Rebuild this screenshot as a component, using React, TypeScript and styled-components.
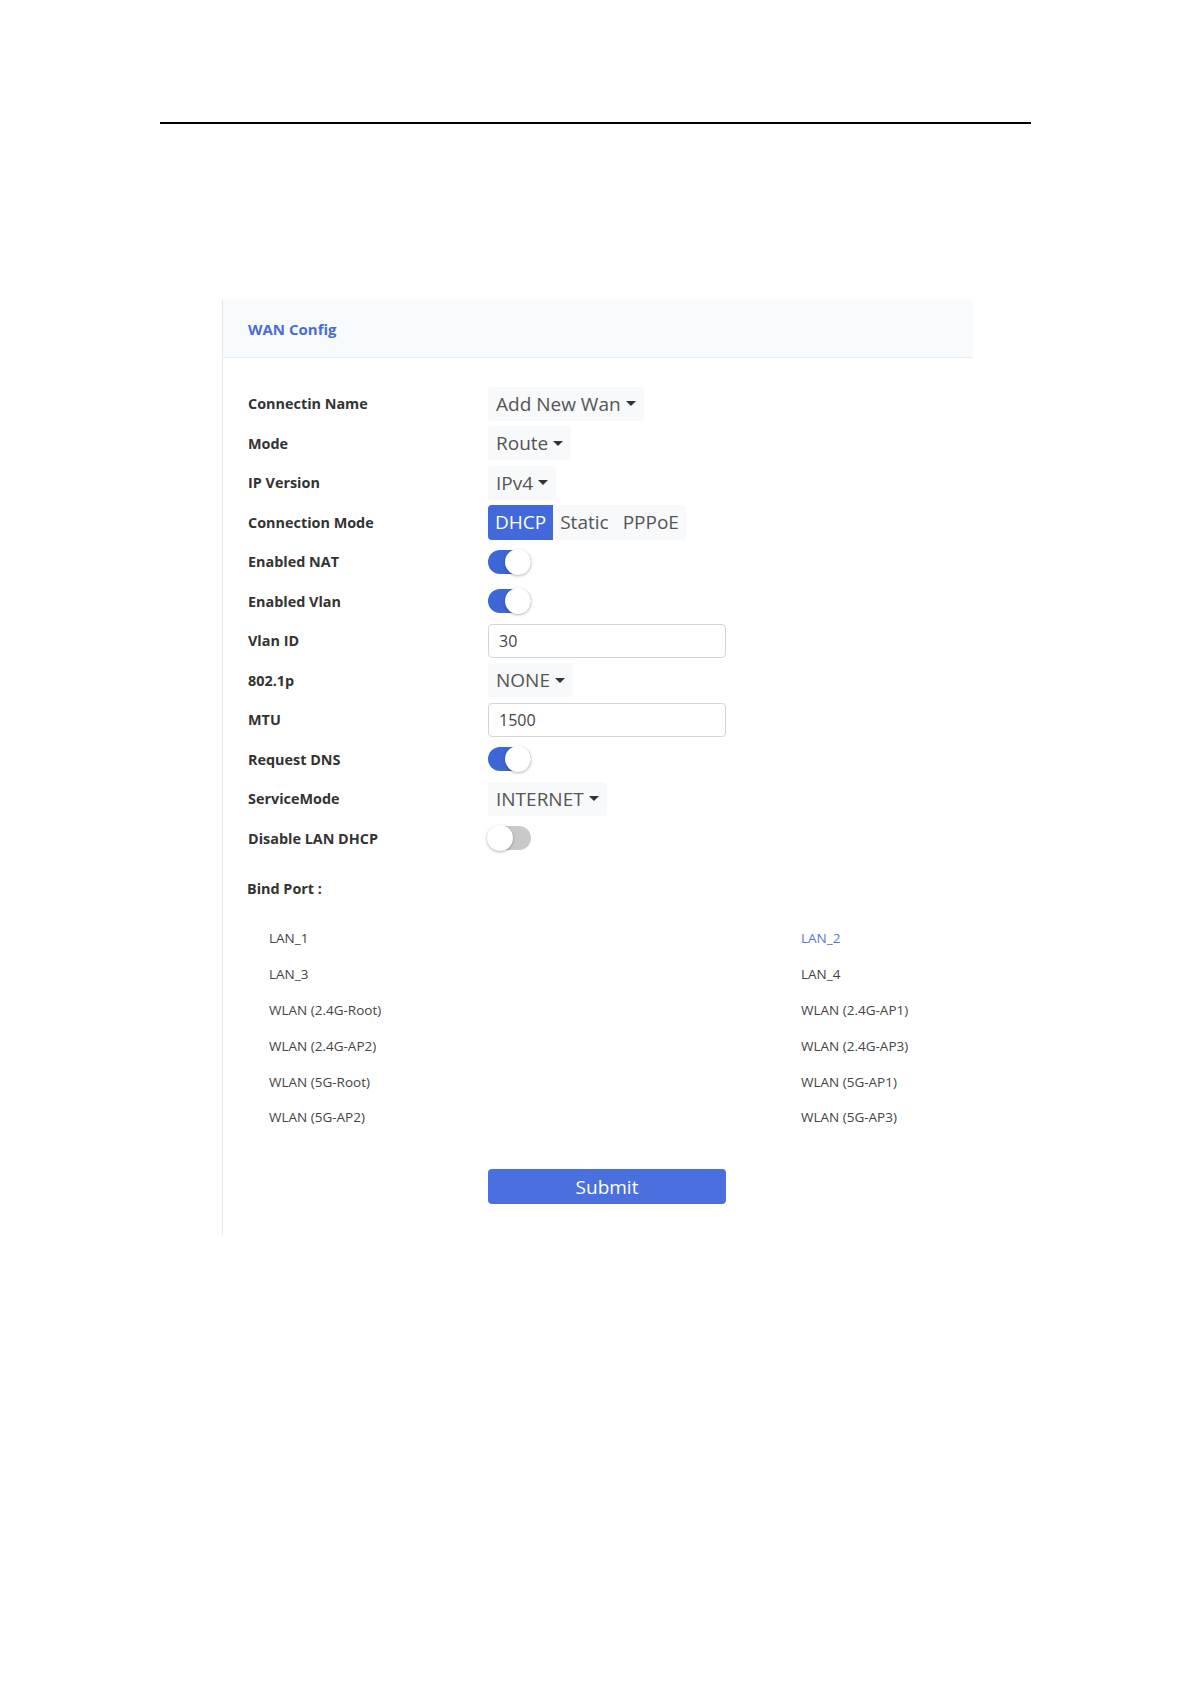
import React from "react";
import styled, { createGlobalStyle } from "styled-components";

const GlobalStyle = createGlobalStyle`
  body {
    margin: 0;
    background: #ffffff;
    font-family: "Open Sans", "Noto Sans", "Liberation Sans", sans-serif;
  }
`;

const Page = styled.div`
  padding: 122px 0 0 160px;
  width: 871px;
`;

const Rule = styled.div`
  border-top: 2px solid #000;
`;

const Panel = styled.section`
  margin: 176px 0 0 62px;
  width: 750px;
  border-left: 1px solid #e6e8ea;
  padding-bottom: 31px;
`;

const PanelHeader = styled.header`
  height: 57px;
  display: flex;
  align-items: center;
  padding-left: 25px;
  background: #f7fbfd;
  border-bottom: 1px solid #e6ecf0;
  box-shadow: 0 -2px 6px rgba(0, 0, 0, 0.02);
`;

const Title = styled.h2`
  margin: 0;
  font-size: 15px;
  font-weight: 700;
  color: #4a6bd9;
`;

const Form = styled.div`
  padding-top: 26px;
`;

const Row = styled.div`
  display: grid;
  grid-template-columns: 240px 1fr;
  align-items: center;
  height: 39.5px;
  padding-left: 25px;
`;

const Label = styled.div`
  font-size: 14.4px;
  font-weight: 700;
  color: #333;
`;

const Dropdown = styled.div`
  display: inline-flex;
  align-items: center;
  gap: 5px;
  height: 34px;
  padding: 0 8px;
  background: #f8f9fa;
  border-radius: 4px;
  font-size: 19px;
  color: #555;
  width: fit-content;
`;

const Caret = styled.span`
  width: 0;
  height: 0;
  border-left: 5px solid transparent;
  border-right: 5px solid transparent;
  border-top: 5px solid #333;
`;

const Segmented = styled.div`
  display: inline-flex;
  height: 35px;
  background: #f8f9fa;
  border-radius: 4px;
  width: fit-content;
`;

const Segment = styled.div<{ $active?: boolean }>`
  display: flex;
  align-items: center;
  padding: 0 7px;
  font-size: 19px;
  color: ${(p) => (p.$active ? "#fff" : "#555")};
  background: ${(p) => (p.$active ? "#4169dc" : "transparent")};
  border-radius: ${(p) => (p.$active ? "4px 0 0 4px" : "0")};
`;

const Toggle = styled.div<{ $on: boolean }>`
  position: relative;
  width: 43px;
  height: 24px;
  border-radius: 12px;
  background: ${(p) => (p.$on ? "#3d66d6" : "#c9c9c9")};

  &::after {
    content: "";
    position: absolute;
    top: -1px;
    left: ${(p) => (p.$on ? "17px" : "-1px")};
    width: 26px;
    height: 26px;
    border-radius: 50%;
    background: #fff;
    box-shadow: 0 1px 3px rgba(0, 0, 0, 0.3);
  }
`;

const Input = styled.input`
  box-sizing: border-box;
  width: 238px;
  height: 34px;
  padding: 0 10px;
  border: 1px solid #d2d6da;
  border-radius: 4px;
  font-family: inherit;
  font-size: 16px;
  color: #444;
  outline: none;
`;

const BindTitle = styled.div`
  margin: 21px 0 0 24px;
  height: 20px;
  line-height: 20px;
  font-size: 14.4px;
  font-weight: 700;
  color: #333;
`;

const PortGrid = styled.div`
  display: grid;
  grid-template-columns: 532px 1fr;
  grid-auto-rows: 35.9px;
  align-items: center;
  padding: 21px 0 0 46px;
`;

const Port = styled.div<{ $selected?: boolean }>`
  font-size: 13.5px;
  color: ${(p) => (p.$selected ? "#5576d9" : "#444")};
`;

const SubmitRow = styled.div`
  padding: 34px 0 0 265px;
`;

const SubmitButton = styled.button`
  width: 238px;
  height: 35px;
  border: none;
  border-radius: 4px;
  background: #4a70e0;
  color: #fff;
  font-family: inherit;
  font-size: 19px;
`;

const ports = [
  "LAN_1",
  "LAN_2",
  "LAN_3",
  "LAN_4",
  "WLAN (2.4G-Root)",
  "WLAN (2.4G-AP1)",
  "WLAN (2.4G-AP2)",
  "WLAN (2.4G-AP3)",
  "WLAN (5G-Root)",
  "WLAN (5G-AP1)",
  "WLAN (5G-AP2)",
  "WLAN (5G-AP3)",
];

const Select: React.FC<{ value: string }> = ({ value }) => (
  <Dropdown>
    {value}
    <Caret />
  </Dropdown>
);

export default function App() {
  return (
    <Page>
      <GlobalStyle />
      <Rule />
      <Panel>
        <PanelHeader>
          <Title>WAN Config</Title>
        </PanelHeader>
        <Form>
          <Row>
            <Label>Connectin Name</Label>
            <Select value="Add New Wan" />
          </Row>
          <Row>
            <Label>Mode</Label>
            <Select value="Route" />
          </Row>
          <Row>
            <Label>IP Version</Label>
            <Select value="IPv4" />
          </Row>
          <Row>
            <Label>Connection Mode</Label>
            <Segmented>
              <Segment $active>DHCP</Segment>
              <Segment>Static</Segment>
              <Segment>PPPoE</Segment>
            </Segmented>
          </Row>
          <Row>
            <Label>Enabled NAT</Label>
            <Toggle $on />
          </Row>
          <Row>
            <Label>Enabled Vlan</Label>
            <Toggle $on />
          </Row>
          <Row>
            <Label>Vlan ID</Label>
            <Input defaultValue="30" />
          </Row>
          <Row>
            <Label>802.1p</Label>
            <Select value="NONE" />
          </Row>
          <Row>
            <Label>MTU</Label>
            <Input defaultValue="1500" />
          </Row>
          <Row>
            <Label>Request DNS</Label>
            <Toggle $on />
          </Row>
          <Row>
            <Label>ServiceMode</Label>
            <Select value="INTERNET" />
          </Row>
          <Row>
            <Label>Disable LAN DHCP</Label>
            <Toggle $on={false} />
          </Row>
          <BindTitle>Bind Port :</BindTitle>
          <PortGrid>
            {ports.map((p) => (
              <Port key={p} $selected={p === "LAN_2"}>
                {p}
              </Port>
            ))}
          </PortGrid>
          <SubmitRow>
            <SubmitButton>Submit</SubmitButton>
          </SubmitRow>
        </Form>
      </Panel>
    </Page>
  );
}
